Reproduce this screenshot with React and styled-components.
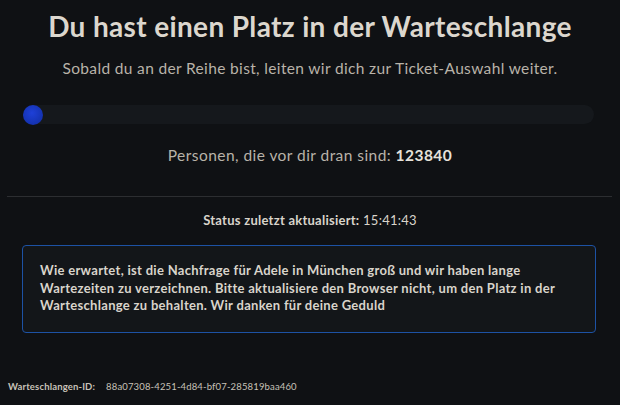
import React from "react";
import styled, { createGlobalStyle } from "styled-components";

const Global = createGlobalStyle`
  html, body { margin: 0; padding: 0; background: #0f1114; }
  body { font-family: "Lato", "Noto Sans", sans-serif; color: #d9d4cb; }
`;

const Page = styled.div`
  width: 620px;
  height: 405px;
  display: flex;
  flex-direction: column;
  background: #0f1114;
  box-sizing: border-box;
`;

const Heading = styled.h1`
  margin: 10px 0 0;
  text-align: center;
  font-size: 28px;
  font-weight: 700;
  line-height: 32px;
  color: #dcd7ce;
  letter-spacing: 0.35px;
`;

const Sub = styled.p`
  margin: 16px 0 0;
  text-align: center;
  font-size: 15.5px;
  line-height: 20px;
  letter-spacing: 0.35px;
  color: #b9b3a9;
`;

const Track = styled.div`
  margin: 27px 26px 0 23px;
  height: 19px;
  border-radius: 10px;
  background: #15181c;
  display: flex;
  align-items: center;
`;

const Dot = styled.div`
  width: 20px;
  height: 20px;
  border-radius: 50%;
  background: radial-gradient(circle at 45% 40%, #1e40d8, #1432b0 70%, #102a90);
`;

const Count = styled.p`
  margin: 21px 0 0;
  text-align: center;
  font-size: 15.5px;
  line-height: 20px;
  letter-spacing: 0.45px;
  color: #b9b3a9;
  b { color: #e6e2da; font-weight: 700; }
`;

const Divider = styled.hr`
  margin: 31px 8px 0 7px;
  border: none;
  height: 1px;
  background: #2c2e31;
`;

const Status = styled.p`
  margin: 15px 0 0;
  text-align: center;
  font-size: 13px;
  line-height: 16px;
  letter-spacing: 0.25px;
  color: #d9d4cb;
  b { font-weight: 700; }
`;

const Notice = styled.div`
  margin: 17px 24px 0 22px;
  padding: 16px 16px 17px 17px;
  border: 1.5px solid #1d52a4;
  border-radius: 4px;
  background: #131619;
  font-size: 13px;
  font-weight: 700;
  line-height: 17.5px;
  letter-spacing: 0.3px;
  color: #d9d4cb;
`;

const Footer = styled.div`
  margin-top: auto;
  padding: 0 0 13px 8px;
  display: flex;
  gap: 11px;
  font-size: 9.5px;
  letter-spacing: 0.15px;
  color: #c8c2b8;
`;

const FooterLabel = styled.span`
  font-weight: 700;
`;

export default function App() {
  return (
    <Page>
      <Global />
      <Heading>Du hast einen Platz in der Warteschlange</Heading>
      <Sub>Sobald du an der Reihe bist, leiten wir dich zur Ticket-Auswahl weiter.</Sub>
      <Track>
        <Dot />
      </Track>
      <Count>
        Personen, die vor dir dran sind: <b>123840</b>
      </Count>
      <Divider />
      <Status>
        <b>Status zuletzt aktualisiert:</b> 15:41:43
      </Status>
      <Notice>
        Wie erwartet, ist die Nachfrage für Adele in München groß und wir haben lange
        <br />
        Wartezeiten zu verzeichnen. Bitte aktualisiere den Browser nicht, um den Platz in der
        <br />
        Warteschlange zu behalten. Wir danken für deine Geduld
      </Notice>
      <Footer>
        <FooterLabel>Warteschlangen-ID:</FooterLabel>
        <span>88a07308-4251-4d84-bf07-285819baa460</span>
      </Footer>
    </Page>
  );
}
